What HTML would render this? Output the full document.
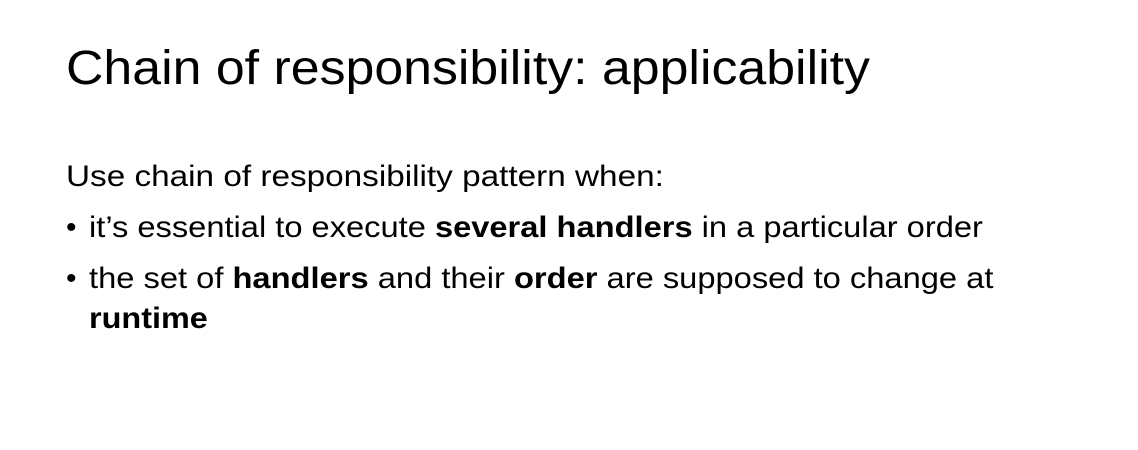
<!DOCTYPE html>
<html><head><meta charset="utf-8"><style>
html,body{margin:0;padding:0;background:#fff;width:1138px;height:450px;overflow:hidden}
body{font-family:"Liberation Sans",sans-serif;color:#000;position:relative}
.t{position:absolute;left:66px;top:40px;font-size:48px;line-height:58px;white-space:nowrap;transform-origin:left top}
.l{position:absolute;font-size:30px;line-height:34px;white-space:nowrap;transform-origin:left top}
b{font-weight:bold}
.dot{position:absolute;left:66px;font-size:30px;line-height:34px}
</style></head><body>
<div class="t" style="transform:scaleX(1.08)">Chain of responsibility: applicability</div>
<div class="l" style="left:66px;top:160px;transform:scaleX(1.11)">Use chain of responsibility pattern when:</div>
<div class="dot" style="top:211px">•</div>
<div class="l" style="left:89px;top:211px;transform:scaleX(1.088)">it’s essential to execute <b>several handlers</b> in a particular order</div>
<div class="dot" style="top:262px">•</div>
<div class="l" style="left:89px;top:262px;transform:scaleX(1.089)">the set of <b>handlers</b> and their <b>order</b> are supposed to change at</div>
<div class="l" style="left:89px;top:302px;transform:scaleX(1.08)"><b>runtime</b></div>
</body></html>
